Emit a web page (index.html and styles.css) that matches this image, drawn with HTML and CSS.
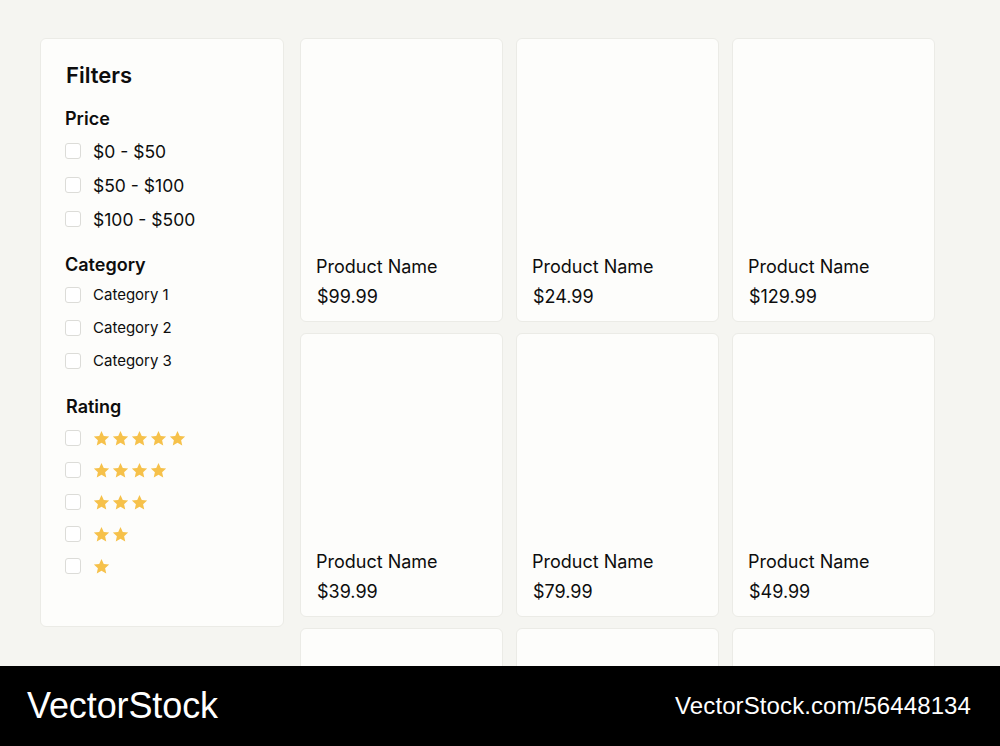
FILE: index.html
```html
<!DOCTYPE html>
<html lang="en">
<head>
<meta charset="UTF-8">
<meta name="viewport" content="width=device-width, initial-scale=1.0"/>
<title>Shop</title>
<link rel="stylesheet" href="styles.css">
</head>
<body>
<svg width="0" height="0" style="position:absolute">
    <defs>
        <symbol id="star" viewBox="0 0 24 24">
            <path d="M12 1.5l3.2 7 7.6.8-5.7 5.1 1.6 7.5L12 18l-6.7 3.9 1.6-7.5L1.2 9.3l7.6-.8z"/>
        </symbol>
    </defs>
</svg>
<div class="page">
    <aside class="filters">
        <h1>Filters</h1>
        <h2>Price</h2>
        <ul class="opts price">
            <li><span class="box"></span>$0 - $50</li>
            <li><span class="box"></span>$50 - $100</li>
            <li><span class="box"></span>$100 - $500</li>
        </ul>
        <h2 class="gap">Category</h2>
        <ul class="opts cat">
            <li><span class="box"></span>Category 1</li>
            <li><span class="box"></span>Category 2</li>
            <li><span class="box"></span>Category 3</li>
        </ul>
        <h2 class="gap rating">Rating</h2>
        <ul class="opts stars" id="stars"></ul>
    </aside>
    <main class="grid">
        <div class="card"><div class="name">Product Name</div><div class="price-tag">$99.99</div></div>
        <div class="card"><div class="name">Product Name</div><div class="price-tag">$24.99</div></div>
        <div class="card"><div class="name">Product Name</div><div class="price-tag">$129.99</div></div>
        <div class="card"><div class="name">Product Name</div><div class="price-tag">$39.99</div></div>
        <div class="card"><div class="name">Product Name</div><div class="price-tag">$79.99</div></div>
        <div class="card"><div class="name">Product Name</div><div class="price-tag">$49.99</div></div>
        <!-- next row only peeks out above the footer band -->
        <div class="card"></div>
        <div class="card"></div>
        <div class="card"></div>
    </main>
</div>
<div class="band">
    <span class="brand">VectorStock</span>
    <span class="ref">VectorStock.com/56448134</span>
</div>
<script>
const list = document.getElementById('stars');
for(let n=5;n>=1;n--){
    const li=document.createElement('li');
    let html='<span class="box"></span><span class="row">';
    for(let i=0;i<n;i++) html+='<svg class="star"><use href="#star"/></svg>';
    li.innerHTML=html+'</span>';
    list.appendChild(li);
}
</script>
</body>
</html>
```

FILE: styles.css
```css
* { margin:0; padding:0; box-sizing:border-box; }
body {
    font-family: Inter, 'Noto Sans', sans-serif;
    background: #f5f5f1;
    color: #0d0d0d;
    height: 100vh;
    overflow: hidden;
}
.page {
    display: flex;
    align-items: flex-start;
    gap: 16px;
    padding: 38px 40px;
}
.filters {
    width: 244px;
    background: #fdfdfb;
    border: 1px solid #ebebe6;
    border-radius: 6px;
    padding: 23px 24px 44px;
}
.filters h1 {
    font-size: 22px;
    font-weight: 600;
    line-height: 26px;
    margin-left: 1px;
    margin-bottom: 19px;
}
.filters h2 {
    font-size: 18px;
    font-weight: 600;
    line-height: 24px;
    margin-bottom: 3px;
}
.filters h2.gap { margin-top: 17px; margin-bottom: 1px; }
.filters h2.rating { margin-left: 1px; margin-top: 18px; margin-bottom: 3px; }
.opts { list-style: none; }
.opts li {
    display: flex;
    align-items: center;
    gap: 12px;
    height: 34px;
    font-size: 17.5px;
}
.opts.cat li { height: 33px; font-size: 15px; }
.opts.stars li { height: 32px; }
.box {
    width: 16px; height: 16px;
    border: 1px solid #dcdcd8;
    border-radius: 3px;
    background: #fff;
    flex-shrink: 0;
}
.row { display: flex; gap: 2px; }
.star { width: 17px; height: 17px; fill: #f6c14a; }
.grid {
    display: grid;
    grid-template-columns: repeat(3, 203px);
    column-gap: 13px;
    row-gap: 11px;
}
.card {
    height: 284px;
    background: #fdfdfb;
    border: 1px solid #ebebe6;
    border-radius: 6px;
    display: flex;
    flex-direction: column;
    justify-content: flex-end;
    padding: 0 15px 9px;
}
.name { font-size: 18px; line-height: 30px; }
.price-tag { font-size: 18px; line-height: 30px; margin-left: 1px; }
.band {
    position: fixed;
    left: 0; bottom: 0;
    width: 100%; height: 80px;
    background: #000;
    color: #fff;
    display: flex;
    justify-content: space-between;
    align-items: center;
    padding: 0 29px 0 27px;
    font-family: 'Liberation Sans', Arial, sans-serif;
}
.brand { font-size: 36px; letter-spacing: -0.1px; }
.ref { font-size: 24px; letter-spacing: 0.1px; }
```
